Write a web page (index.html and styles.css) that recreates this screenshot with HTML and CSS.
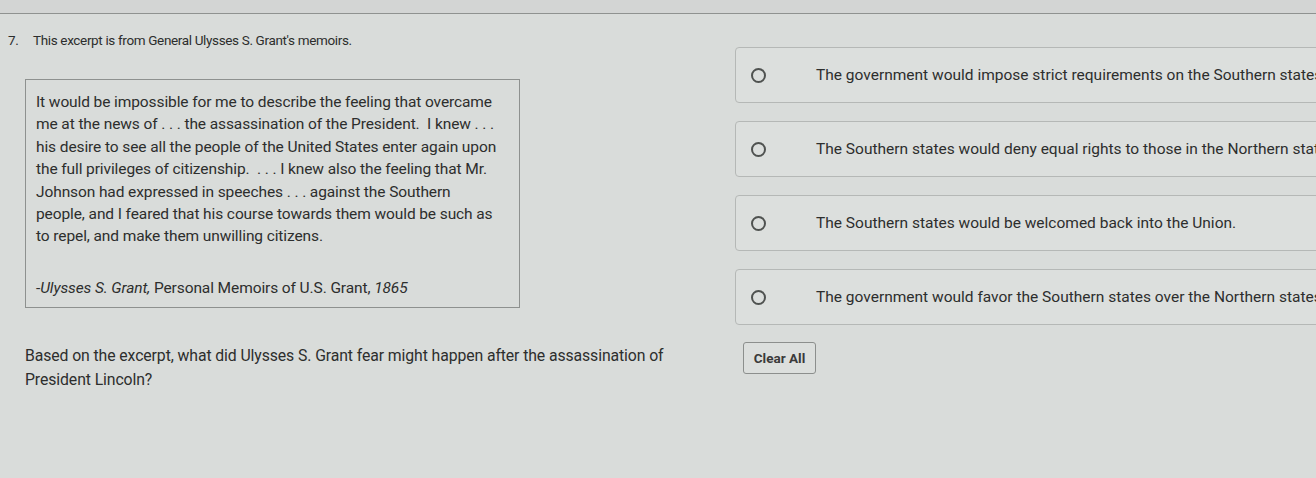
FILE: index.html
```html
<!DOCTYPE html>
<html lang="en">
<head>
    <meta charset="UTF-8">
    <meta name="viewport" content="width=device-width, initial-scale=1.0">
    <title>Question 7</title>
    <link rel="stylesheet" href="styles.css">
</head>
<body>
    <div class="topbar"></div>

    <div class="question">
        <!-- Stem: prompt, source passage and the question itself -->
        <div class="stem">
            <p class="prompt"><span class="num">7.</span>This excerpt is from General Ulysses S. Grant's memoirs.</p>

            <div class="passage">
                <p>It would be impossible for me to describe the feeling that overcame<br>
                me at the news of . . . the assassination of the President.&nbsp; I knew . . .<br>
                his desire to see all the people of the United States enter again upon<br>
                the full privileges of citizenship.&nbsp; . . . I knew also the feeling that Mr.<br>
                Johnson had expressed in speeches . . . against the Southern<br>
                people, and I feared that his course towards them would be such as<br>
                to repel, and make them unwilling citizens.</p>
                <p class="cite">-<em>Ulysses S. Grant,</em> Personal Memoirs of U.S. Grant, <em>1865</em></p>
            </div>

            <p class="ask">Based on the excerpt, what did Ulysses S. Grant fear might happen after the assassination of<br>
            President Lincoln?</p>
        </div>

        <!-- Answer choices (long ones run past the right edge of the panel) -->
        <div class="answers">
            <label class="choice">
                <input type="radio" name="q7">
                <span class="dot"></span>
                <span class="label">The government would impose strict requirements on the Southern states.</span>
            </label>
            <label class="choice">
                <input type="radio" name="q7">
                <span class="dot"></span>
                <span class="label">The Southern states would deny equal rights to those in the Northern states.</span>
            </label>
            <label class="choice">
                <input type="radio" name="q7">
                <span class="dot"></span>
                <span class="label">The Southern states would be welcomed back into the Union.</span>
            </label>
            <label class="choice">
                <input type="radio" name="q7">
                <span class="dot"></span>
                <span class="label">The government would favor the Southern states over the Northern states.</span>
            </label>

            <button class="clear" type="button">Clear All</button>
        </div>
    </div>
</body>
</html>
```

FILE: styles.css
```css
* {
    margin: 0;
    padding: 0;
    box-sizing: border-box;
}

body {
    font-family: Roboto, 'Liberation Sans', Arial, sans-serif;
    background-color: #d9dcda;
    color: #2d2e2d;
    overflow: hidden;
}

.topbar {
    height: 14px;
    background-color: #d3d5d4;
    border-bottom: 1px solid #8f9290;
}

.question {
    display: flex;
    padding: 16px 0 0 8px;
}

/* Left side */
.stem {
    flex: 0 0 690px;
}

.prompt {
    font-size: 13.5px;
    letter-spacing: -0.35px;
    line-height: 20px;
    display: flex;
}

.num {
    width: 25px;
}

.passage {
    width: 495px;
    margin: 29px 0 0 17px;
    padding: 11px 6px 8px 10px;
    border: 1px solid #8e918f;
    font-size: 15.5px;
    letter-spacing: -0.1px;
    line-height: 22.4px;
    white-space: nowrap;
}

.cite {
    margin-top: 29px;
}

.ask {
    margin: 36px 0 0 17px;
    font-size: 15.8px;
    letter-spacing: -0.1px;
    line-height: 24px;
    white-space: nowrap;
}

/* Right side */
.answers {
    flex: 0 0 760px;
    margin: 17px 0 0 37px;
}

.choice {
    display: flex;
    align-items: center;
    height: 56px;
    margin-bottom: 18px;
    padding-left: 15px;
    border: 1px solid #b5b8b6;
    border-radius: 4px;
    background-color: #dcdfdd;
    font-size: 15.5px;
    white-space: nowrap;
    cursor: pointer;
}

.choice input {
    display: none;
}

.dot {
    flex: 0 0 15px;
    height: 15px;
    border: 2px solid #4f5250;
    border-radius: 50%;
}

.choice input:checked + .dot {
    box-shadow: inset 0 0 0 3px #dcdfdd;
    background-color: #4f5250;
}

.label {
    margin-left: 50px;
}

.clear {
    margin: -1px 0 0 8px;
    width: 73px;
    height: 32px;
    border: 1px solid #8c8f8d;
    border-radius: 3px;
    background-color: #dcdfdd;
    color: #3a3a3a;
    font-family: Roboto, 'Liberation Sans', Arial, sans-serif;
    font-weight: bold;
    font-size: 13.5px;
    cursor: pointer;
}
```
